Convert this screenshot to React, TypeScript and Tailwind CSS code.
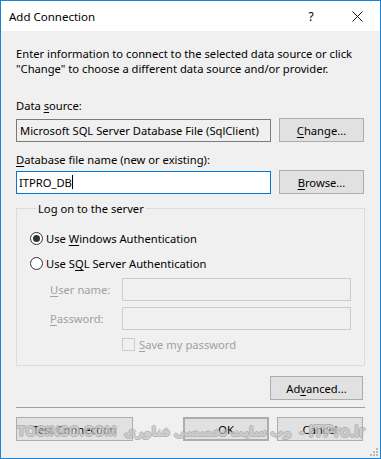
import React from "react";

const Btn = ({ children, className = "" }: { children: React.ReactNode; className?: string }) => (
  <div
    className={`flex items-center justify-center h-[24px] bg-[#e1e1e1] border border-[#adadad] text-black ${className}`}
  >
    {children}
  </div>
);

const U = ({ children }: { children: React.ReactNode }) => (
  <span className="underline underline-offset-[2px] decoration-1">{children}</span>
);

export default function App() {
  return (
    <div
      className="relative w-[381px] h-[459px] border border-[#1883d7] bg-[#f0f0f0] flex flex-col text-[11.2px] text-black leading-[15px] overflow-hidden whitespace-nowrap"
      style={{ fontFamily: '"Segoe UI", "Noto Sans", sans-serif' }}
    >
      {/* Title bar */}
      <div className="h-[30px] bg-white flex items-center pl-[8px] shrink-0">
        <span className="text-[11.5px]">Add Connection</span>
        <div className="ml-auto flex items-center">
          <span className="w-[46px] text-center text-[12px]">?</span>
          <span className="w-[46px] flex justify-center">
            <svg width="11" height="11" viewBox="0 0 11 11">
              <path d="M0.5 0.5 L10.5 10.5 M10.5 0.5 L0.5 10.5" stroke="#111" strokeWidth="1" />
            </svg>
          </span>
        </div>
      </div>

      {/* Body */}
      <div className="flex flex-col px-[15px] pt-[15px]">
        <p>
          Enter information to connect to the selected data source or click
          <br />
          "Change" to choose a different data source and/or provider.
        </p>

        <div className="mt-[22px]">
          Data <U>s</U>ource:
        </div>
        <div className="mt-[5px] flex items-center">
          <div className="w-[255px] h-[23px] border border-[#7a7a7a] bg-[#f0f0f0] flex items-center px-[3px]">
            Microsoft SQL Server Database File (SqlClient)
          </div>
          <Btn className="ml-[8px] w-[85px]">
            <U>C</U>hange...
          </Btn>
        </div>

        <div className="mt-[10px]">
          <U>D</U>atabase file name (new or existing):
        </div>
        <div className="mt-[3px] flex items-center">
          <div className="w-[255px] h-[23px] border border-[#0078d7] bg-white flex items-center px-[2px]">
            ITPRO_DB<span className="inline-block w-px h-[14px] bg-black" />
          </div>
          <Btn className="ml-[8px] w-[85px]">
            <U>B</U>rowse...
          </Btn>
        </div>

        <fieldset className="mt-[7px] border border-[#dcdcdc] pl-[13px] pr-[13px] pb-[13px] min-w-0">
          <legend className="ml-[6px] px-[2px]">Log on to the server</legend>
          <div className="mt-[15px] flex items-center gap-[3px]">
            <span className="w-[13px] h-[13px] rounded-full border border-[#333] bg-white flex items-center justify-center">
              <span className="w-[7px] h-[7px] rounded-full bg-[#333]" />
            </span>
            <span>
              Use <U>W</U>indows Authentication
            </span>
          </div>
          <div className="mt-[10px] flex items-center gap-[3px]">
            <span className="w-[13px] h-[13px] rounded-full border border-[#333] bg-white" />
            <span>
              Use S<U>Q</U>L Server Authentication
            </span>
          </div>
          <div className="mt-[7px] flex items-center text-[#a0a0a0]">
            <span className="w-[92px] pl-[20px]">
              <U>U</U>ser name:
            </span>
            <div className="w-[229px] h-[23px] border border-[#cccccc] bg-[#f0f0f0]" />
          </div>
          <div className="mt-[6px] flex items-center text-[#a0a0a0]">
            <span className="w-[92px] pl-[20px]">
              <U>P</U>assword:
            </span>
            <div className="w-[229px] h-[23px] border border-[#cccccc] bg-[#f0f0f0]" />
          </div>
          <div className="mt-[7px] flex items-center gap-[4px] pl-[92px] text-[#a0a0a0]">
            <span className="w-[13px] h-[13px] border border-[#cccccc] bg-[#f0f0f0]" />
            <span>
              <U>S</U>ave my password
            </span>
          </div>
        </fieldset>

        <div className="mt-[10px] flex justify-end pr-[2px]">
          <Btn className="w-[93px]">
            Ad<U>v</U>anced...
          </Btn>
        </div>

        <div className="mt-[7px] h-px bg-[#a0a0a0]" />

        <div className="mt-[9px] flex items-center pr-[2px]">
          <Btn className="w-[117px]">Test Connection</Btn>
          <Btn className="ml-auto w-[86px] border-2 border-[#0078d7]">OK</Btn>
          <Btn className="ml-[8px] w-[86px]">Cancel</Btn>
        </div>
      </div>

      {/* Watermark */}
      <div
        className="absolute left-[16px] right-[15px] top-[423px] flex items-center justify-between text-[14px] font-bold text-white/40 pointer-events-none opacity-80"
        style={{
          fontFamily: '"Liberation Sans", "DejaVu Sans", sans-serif',
          textShadow: "1px 0 0 #a8a8a8, -1px 0 0 #a8a8a8, 0 1px 0 #a8a8a8, 0 -1px 0 #a8a8a8",
        }}
      >
        <span>TOSINSO.COM</span>
        <span dir="rtl" className="text-[13px]">وب سایت تخصصی فناوری</span>
        <span className="text-[16px]">- ITPro.ir</span>
      </div>

      {/* Size grip */}
      <svg className="absolute right-[2px] bottom-[2px]" width="8" height="8" viewBox="0 0 8 8">
        <rect x="6" y="0" width="2" height="2" fill="#b8b8b8" />
        <rect x="3" y="3" width="2" height="2" fill="#b8b8b8" />
        <rect x="6" y="3" width="2" height="2" fill="#b8b8b8" />
        <rect x="0" y="6" width="2" height="2" fill="#b8b8b8" />
        <rect x="3" y="6" width="2" height="2" fill="#b8b8b8" />
        <rect x="6" y="6" width="2" height="2" fill="#b8b8b8" />
      </svg>
    </div>
  );
}
